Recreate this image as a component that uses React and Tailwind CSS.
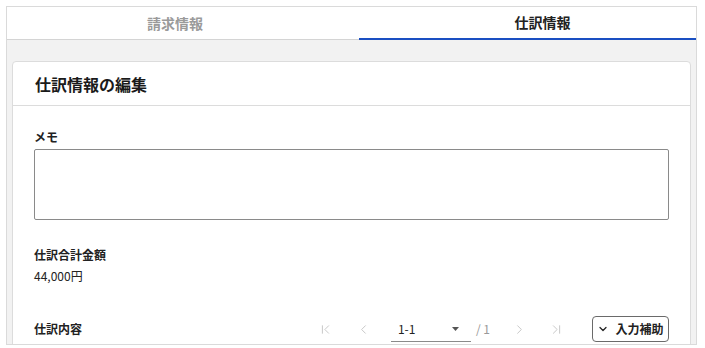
import React, { useState } from "react";
import { ChevronDown, ChevronFirst, ChevronLast, ChevronLeft, ChevronRight } from "lucide-react";

export default function App() {
  const [tab, setTab] = useState("shiwake");
  const [memo, setMemo] = useState("");

  return (
    <div
      className="bg-white w-[705px] h-[348px] pt-[6px] pl-[6px]"
      style={{ fontFamily: '"Noto Sans CJK JP", "Noto Sans", sans-serif' }}
    >
      <div className="w-[691px] h-[339px] border border-[#dadada] flex flex-col overflow-hidden">
        {/* tabs */}
        <div className="flex h-[33px] border-b border-[#d4d4d4] bg-white shrink-0">
          <button
            onClick={() => setTab("seikyu")}
            className={
              "w-[352px] pr-[16px] text-[14px] font-bold -mb-px " +
              (tab === "seikyu" ? "text-[#222] border-b-2 border-[#1a4fc2]" : "text-[#9a9a9a]")
            }
          >
            請求情報
          </button>
          <button
            onClick={() => setTab("shiwake")}
            className={
              "flex-1 pl-[30px] text-[14px] font-bold -mb-px " +
              (tab === "shiwake" ? "text-[#222] border-b-2 border-[#1a4fc2]" : "text-[#9a9a9a]")
            }
          >
            仕訳情報
          </button>
        </div>

        {/* content */}
        <div className="flex-1 bg-[#f2f2f2] pt-[21px] px-[5px]">
          <div className="bg-white border border-[#dcdcdc] rounded-[4px]">
            <div className="h-[44px] border-b border-[#dcdcdc] px-[22px] flex items-center">
              <h2 className="text-[16px] font-bold text-[#1a1a1a]">仕訳情報の編集</h2>
            </div>

            <div className="px-[21px] pt-[22px] pb-6">
              <label className="block text-[12px] font-bold leading-[18px] text-[#222] mb-[3px]">メモ</label>
              <textarea
                value={memo}
                onChange={(e) => setMemo(e.target.value)}
                className="block w-full h-[71px] border border-[#8a8a8a] rounded-[2px] resize-none outline-none p-2 text-[12px]"
              />

              <div className="mt-[26px] text-[12px] font-bold leading-[18px] text-[#222]">仕訳合計金額</div>
              <div className="mt-[3px] text-[12px] leading-[18px] text-[#222]">44,000円</div>

              <div className="mt-[31px] flex items-center h-[26px]">
                <div className="text-[12px] font-bold text-[#222]">仕訳内容</div>
                <div className="ml-auto flex items-center text-[#c4c4c4]">
                  <ChevronFirst size={15} strokeWidth={1.5} />
                  <ChevronLeft size={15} strokeWidth={1.5} className="ml-[23px]" />
                  <div className="ml-[20px] w-[80px] h-[26px] border-b border-[#8a8a8a] flex items-center pl-[7px] pr-[12px] text-[12px] text-[#222]">
                    <span>1-1</span>
                    <svg width="7" height="4" viewBox="0 0 7 4" className="ml-auto">
                      <path d="M0 0 L7 0 L3.5 4 Z" fill="#555" />
                    </svg>
                  </div>
                  <span className="ml-[5px] text-[12px] text-[#999]">/ 1</span>
                  <ChevronRight size={15} strokeWidth={1.5} className="ml-[22px]" />
                  <ChevronLast size={15} strokeWidth={1.5} className="ml-[22px]" />
                  <button className="ml-[28px] h-[26px] w-[77px] border border-[#6a6a6a] rounded-[4px] flex items-center justify-center gap-[6px] text-[12px] font-bold text-[#222]">
                    <ChevronDown size={12} strokeWidth={2.5} />
                    入力補助
                  </button>
                </div>
              </div>
            </div>
          </div>
        </div>
      </div>
    </div>
  );
}
